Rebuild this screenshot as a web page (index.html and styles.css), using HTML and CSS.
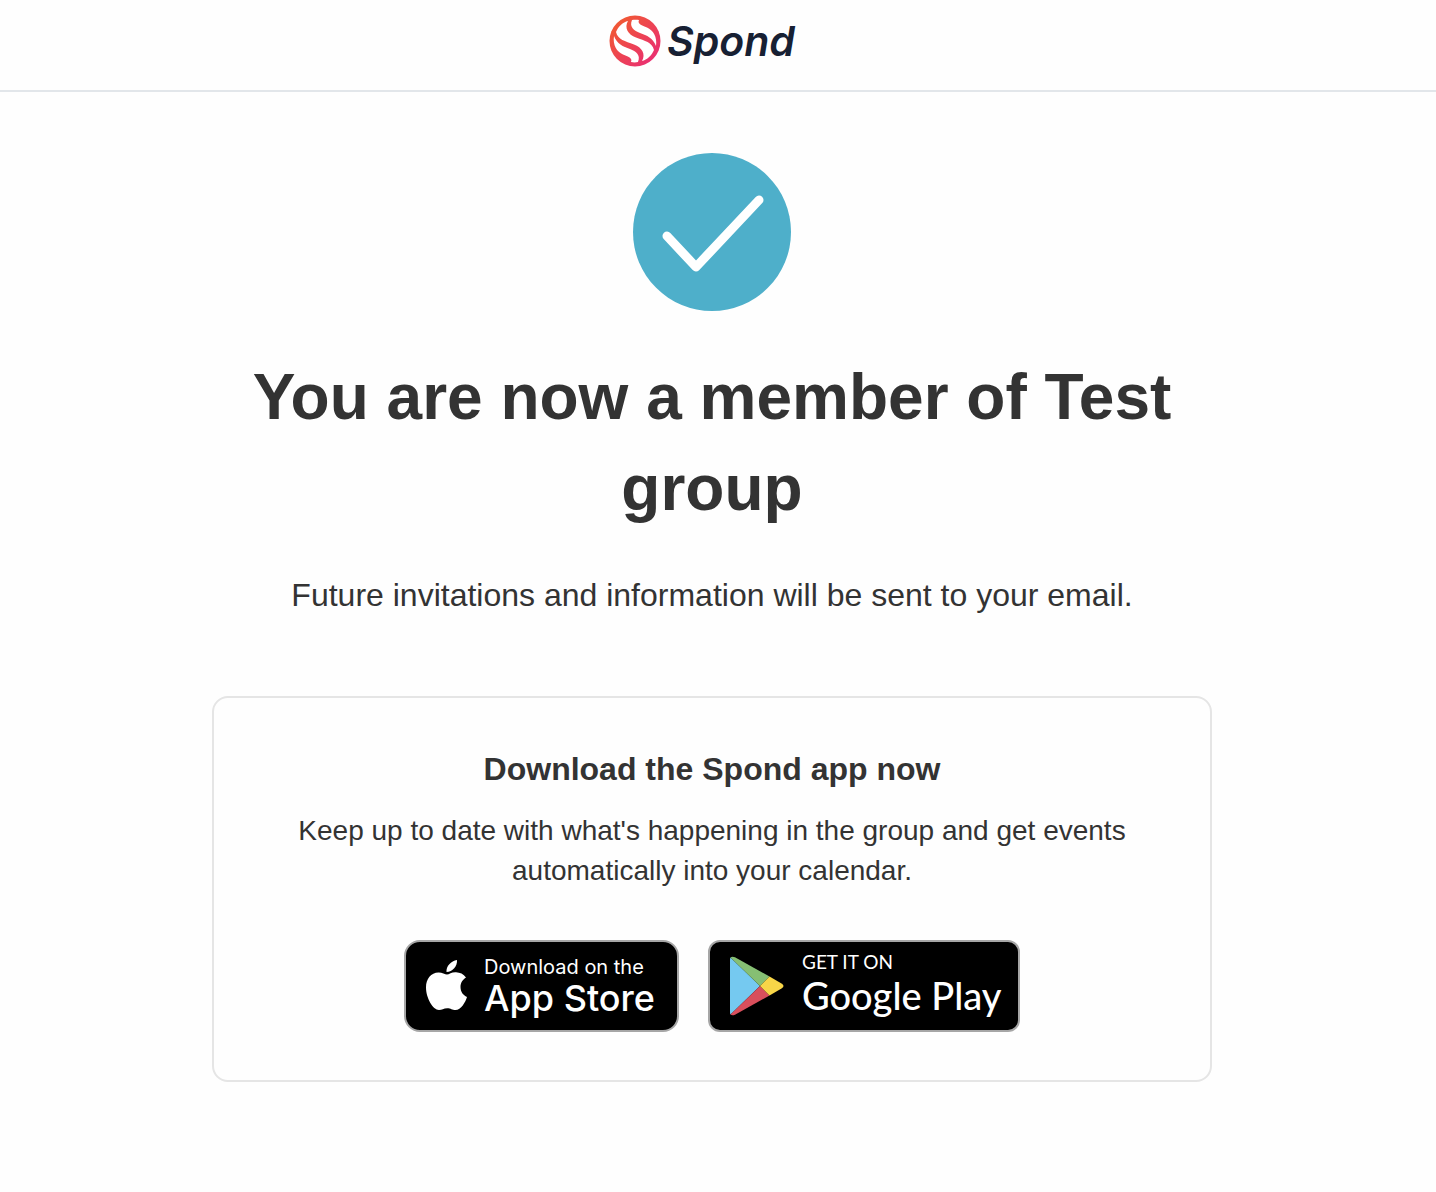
FILE: index.html
```html
<!DOCTYPE html>
<html lang="en">
<head>
  <meta charset="UTF-8" />
  <meta name="viewport" content="width=device-width, initial-scale=1.0" />
  <title>Spond</title>
  <link rel="stylesheet" href="styles.css">
</head>
<body>
  <header class="header">
    <a class="logo" href="#">
      <svg class="logo-mark" viewBox="0 0 52 52" aria-hidden="true">
        <defs>
          <linearGradient id="logo-gradient" x1="0" y1="0" x2="1" y2="1">
            <stop offset="0.1" stop-color="#f15a31" />
            <stop offset="0.9" stop-color="#e92e74" />
          </linearGradient>
        </defs>
        <circle cx="26" cy="26" r="25.5" fill="url(#logo-gradient)" />
        <g fill="#fff">
          <path d="M19 6C15 13 19 19.500 27 22.500C36 26 43 27 45 35C43 40 38 45 33 46C37 39 33 32.500 25 29.500C16 26 9 25 7 17C9 12 14 7 19 6Z" />
          <path id="swoosh" d="M23 5C20 12 25 15.500 31 18C38 20.500 44 23 47 31C48.500 22 44 15 38 12.500C33 10.500 28 9 30 5C28 4.500 25 4.500 23 5Z" />
          <use href="#swoosh" transform="rotate(180 26 26)" />
        </g>
      </svg>
      <span class="logo-text">Spond</span>
    </a>
  </header>

  <main class="content">
    <svg class="check" viewBox="0 0 158 158" aria-hidden="true">
      <circle cx="79" cy="79" r="79" fill="#4eafca" />
      <path d="M34 83L63 114L126 47" fill="none" stroke="#fff" stroke-width="9" stroke-linecap="round" stroke-linejoin="round" />
    </svg>
    <h1>You are now a member of Test group</h1>
    <p class="message">Future invitations and information will be sent to your email.</p>

    <section class="download">
      <h2>Download the Spond app now</h2>
      <p>Keep up to date with what's happening in the group and get events automatically into your calendar.</p>
      <div class="badges">
        <a class="badge badge-apple" href="#">
          <svg class="apple-icon" viewBox="0 0 42 51" aria-hidden="true">
            <path fill="#fff" d="M34.500 27C34.400 22.500 37 19.500 40 17.500C37.500 14 34 12.500 30 12.300C26 12 23 14.500 21 14.500C19 14.500 16 12.300 12.500 12.400C5 12.500 0 18.500 0 27.500C0 38 7 50 13 50C16 50 17.500 48.200 21.200 48.200C25 48.200 26 50 29.500 50C35 50 39.500 42 41 37C37 35 34.600 32 34.500 27Z" />
            <path fill="#fff" d="M20.500 12C20 6 25 1 31 0C31.500 6 26.500 12 20.500 12Z" />
          </svg>
          <span class="badge-text">
            <span class="badge-small">Download on the</span>
            <span class="badge-big">App Store</span>
          </span>
        </a>
        <a class="badge badge-google" href="#">
          <svg class="play-icon" viewBox="0 0 54 60" aria-hidden="true">
            <path fill="#75c9f0" d="M0.500 1.500Q0 2 0 4V56Q0 58 0.500 58.500L30 30Z" />
            <path fill="#86bf73" d="M0.500 1.500Q2 0 5 1.300L39.500 20.500L30 30Z" />
            <path fill="#d94f5c" d="M0.500 58.500Q2 60 5 58.700L39.500 39.500L30 30Z" />
            <path fill="#f8d648" d="M39.500 20.500L51.500 27.500Q55.500 30 51.500 32.500L39.500 39.500L30 30Z" />
          </svg>
          <span class="badge-text">
            <span class="badge-small">GET IT ON</span>
            <span class="badge-big">Google Play</span>
          </span>
        </a>
      </div>
    </section>
  </main>
</body>
</html>
```
FILE: styles.css
```css
* {
  box-sizing: border-box;
}
body {
  margin: 0;
  font-family: "Liberation Sans", Arial, sans-serif;
  color: #333;
  background-color: #fefefe;
}
.header {
  display: flex;
  justify-content: center;
  padding: 15px 32px 23px 0;
  border-bottom: 2px solid #e2e6ea;
}
.logo {
  display: flex;
  align-items: center;
  gap: 6px;
  color: #172033;
  text-decoration: none;
}
.logo-mark {
  width: 52px;
  height: 52px;
}
.logo-text {
  font-family: Inter, sans-serif;
  font-size: 41px;
  font-style: italic;
  font-weight: 600;
  line-height: 52px;
}
.content {
  display: flex;
  flex-direction: column;
  align-items: center;
  max-width: 1036px;
  margin: 0 auto;
  padding: 61px 24px 48px 12px;
  text-align: center;
}
.check {
  width: 158px;
  height: 158px;
}
h1 {
  margin: 41px 0 38px;
  font-size: 64px;
  line-height: 91px;
}
.message {
  margin: 0 0 78px;
  font-size: 32px;
  line-height: 46px;
}
.download {
  width: 100%;
  padding: 48px 64px;
  border: 2px solid #e5e5e5;
  border-radius: 16px;
}
.download h2 {
  margin: 0 0 19px;
  font-size: 32px;
  line-height: 46px;
}
.download p {
  margin: 0 0 49px;
  font-size: 28px;
  line-height: 40px;
}
.badges {
  display: flex;
  flex-wrap: wrap;
  justify-content: center;
  gap: 29px;
}
.badge {
  display: flex;
  height: 92px;
  padding: 0 20px;
  border: 2px solid #a6a6a6;
  color: #fff;
  background-color: #000;
  text-align: left;
  text-decoration: none;
  white-space: nowrap;
}
.badge svg {
  flex-shrink: 0;
}
.badge-text {
  display: flex;
  flex-direction: column;
}
.badge-apple {
  gap: 16px;
  width: 275px;
  border-radius: 16px;
  font-family: Inter, sans-serif;
}
.badge-google {
  gap: 18px;
  width: 312px;
  border-radius: 12px;
  font-family: Lato, sans-serif;
}
.apple-icon {
  width: 42px;
  height: 51px;
  margin-top: 18px;
}
.play-icon {
  width: 54px;
  height: 60px;
  margin-top: 14px;
}
.badge-small {
  margin-top: 12px;
  font-size: 20px;
  font-weight: 400;
  line-height: 26px;
}
.badge-big {
  font-size: 36px;
  font-weight: 500;
  line-height: 36px;
}
.badge-google .badge-small {
  margin-top: 8px;
  font-size: 19px;
  line-height: 24px;
}
.badge-google .badge-big {
  font-size: 38px;
  line-height: 42px;
}
```
